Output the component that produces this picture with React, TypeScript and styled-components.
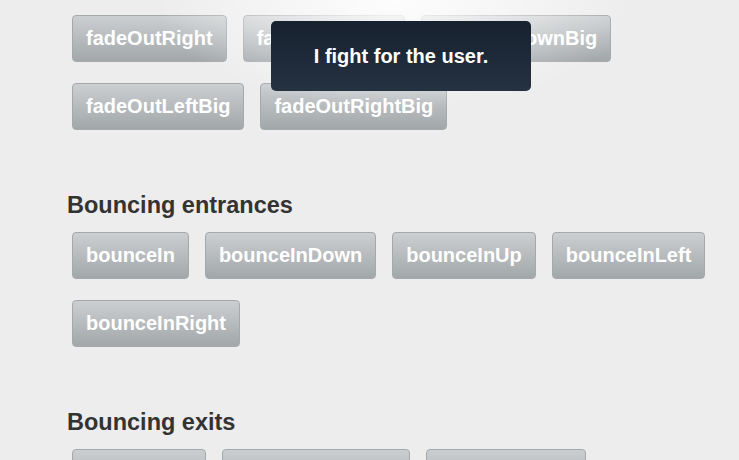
import React from "react";
import styled, { createGlobalStyle } from "styled-components";

const Global = createGlobalStyle`
  html, body { margin: 0; padding: 0; }
  body {
    background: #ededed;
    font-family: "Liberation Sans", Arial, sans-serif;
    overflow: hidden;
  }
`;

const Page = styled.div`
  position: relative;
  width: 739px;
  height: 460px;
  overflow: hidden;
  box-sizing: border-box;
  padding: 15px 20px 0 67px;
  display: flex;
  flex-direction: column;
  gap: 61px;
`;

const Glow = styled.div`
  position: absolute;
  inset: 0;
  pointer-events: none;
  background: radial-gradient(
    ellipse 240px 110px at 395px 0px,
    rgba(255, 255, 255, 0.9) 0%,
    rgba(255, 255, 255, 0.5) 45%,
    rgba(255, 255, 255, 0) 100%
  );
`;

const Section = styled.section`
  display: flex;
  flex-direction: column;
`;

const Heading = styled.h2`
  margin: 0 0 13px;
  font-size: 23.5px;
  line-height: 28px;
  font-weight: bold;
  color: #333;
`;

const Grid = styled.div`
  display: flex;
  flex-wrap: wrap;
  gap: 21px 16px;
  padding-left: 5px;
`;

const Button = styled.button`
  font-family: "Liberation Sans", Arial, sans-serif;
  font-size: 20px;
  font-weight: bold;
  line-height: 25px;
  color: #fff;
  padding: 10px 13px;
  border: 1px solid #a4a9ac;
  border-radius: 4px;
  background: linear-gradient(#cccfd1, #a2a7aa);
  cursor: pointer;
  white-space: nowrap;
`;

const Tooltip = styled.div`
  position: absolute;
  left: 271px;
  top: 21px;
  width: 260px;
  height: 70px;
  border-radius: 5px;
  background: linear-gradient(#17212f, #253242);
  color: #fff;
  font-size: 20px;
  font-weight: bold;
  display: flex;
  align-items: center;
  justify-content: center;
  z-index: 2;
`;

const sections: { title?: string; items: string[] }[] = [
  {
    items: [
      "fadeOutRight",
      "fadeOutUpBig",
      "fadeOutDownBig",
      "fadeOutLeftBig",
      "fadeOutRightBig",
    ],
  },
  {
    title: "Bouncing entrances",
    items: ["bounceIn", "bounceInDown", "bounceInUp", "bounceInLeft", "bounceInRight"],
  },
  {
    title: "Bouncing exits",
    items: ["bounceOut", "bounceOutDown", "bounceOutUp", "bounceOutLeft", "bounceOutRight"],
  },
];

export default function App() {
  return (
    <>
      <Global />
      <Page>
        {sections.map((s, i) => (
          <Section key={i}>
            {s.title && <Heading>{s.title}</Heading>}
            <Grid>
              {s.items.map((it) => (
                <Button key={it}>{it}</Button>
              ))}
            </Grid>
          </Section>
        ))}
        <Glow />
        <Tooltip>I fight for the user.</Tooltip>
      </Page>
    </>
  );
}
